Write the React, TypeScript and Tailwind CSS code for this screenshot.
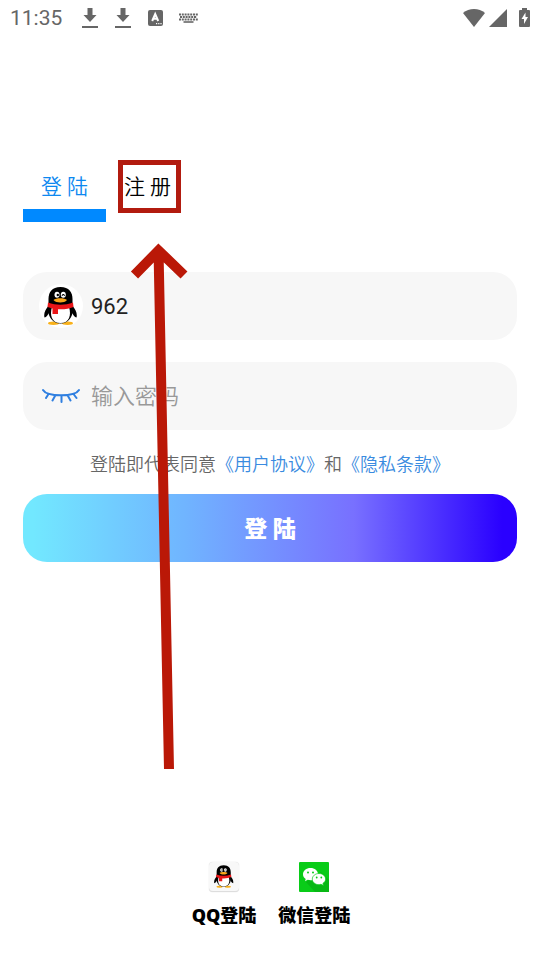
import React, { useState } from 'react'

const FONT = "font-['Roboto','Noto_Sans_CJK_SC',sans-serif]"

function DownloadIcon() {
  return (
    <svg className="h-5 w-4" viewBox="0 0 16 20" fill="#666" aria-hidden="true">
      <path d="M5.500 0h5v7h4L8 14 1.500 7h4z" />
      <path d="M0 18h16v2H0z" />
    </svg>
  )
}

function StatusBar() {
  return (
    <header className="flex h-9 items-center px-[10px] text-[#666]">
      <span className="w-[72px] font-['Roboto',sans-serif] text-[21px] leading-9">11:35</span>
      <DownloadIcon />
      <span className="w-[17px]" />
      <DownloadIcon />
      <svg className="ml-[17px] h-4 w-[15px]" viewBox="0 0 15 16" aria-hidden="true">
        <rect width="15" height="16" rx="2" fill="#666" />
        <path d="M4.200 11 7.200 4l3 7M5 8.800h4.500" fill="none" stroke="#fff" strokeWidth="2" />
        <path d="M8 13h1.200v1.200H8zM10.200 13h1.200v1.200h-1.200zM12.400 13h1.200v1.200h-1.200z" fill="#fff" />
      </svg>
      <svg className="ml-4 h-3 w-[19px]" viewBox="0 0 19 12" fill="none" stroke="#666" aria-hidden="true">
        <path d="M0 2.500h19M1 5h17M0 7.500h19" strokeWidth="1.800" strokeDasharray="2 .8" />
        <path d="M4.500 10h10" strokeWidth="1.600" />
      </svg>
      <svg className="ml-auto h-[19px] w-[22px]" viewBox="0 0 22 19" fill="#666" aria-hidden="true">
        <path d="M0 4C6-1.200 16-1.200 22 4L11 18z" />
      </svg>
      <svg className="ml-1 h-[19px] w-[18px]" viewBox="0 0 18 19" fill="#666" aria-hidden="true">
        <path d="M18 0v18H0z" />
      </svg>
      <svg className="ml-3 h-5 w-[11px]" viewBox="0 0 11 20" aria-hidden="true">
        <path d="M3 0h5v2h2q1 0 1 1v15q0 1-1 1H1q-1 0-1-1V3q0-1 1-1h2z" fill="#666" />
        <path d="M6.500 4.500 2.500 11H5v5l4-7H6.500z" fill="#fff" />
      </svg>
    </header>
  )
}

function Penguin({ className }: { className: string }) {
  return (
    <svg className={className} viewBox="0 0 34 38" aria-hidden="true">
      <ellipse cx="9.500" cy="36.300" rx="5.500" ry="1.700" fill="#f9b11a" />
      <ellipse cx="23.500" cy="36.300" rx="5.500" ry="1.700" fill="#f9b11a" />
      <path d="M5.500 18C1 22-.5 27 .5 30.500 2.500 30.500 4 27.500 5 26M27.500 18c4.500 4 6 9 5 12.500-2 0-3.500-3-4.500-4.500" fill="#000" />
      <path d="M16.500 0C8 0 4.500 5 4.500 12v8c-1.500 8 3 16.500 12 16.500S30 28 28.500 20v-8C28.500 5 25 0 16.500 0z" fill="#000" />
      <path d="M8 20h17c2.500 8 .5 16-8.500 16S5.500 28 8 20z" fill="#fff" />
      <ellipse cx="13" cy="7.800" rx="2.500" ry="3" fill="#fff" />
      <ellipse cx="19.300" cy="7.800" rx="2.500" ry="3" fill="#fff" />
      <circle cx="13.800" cy="8" r="1.200" fill="#000" />
      <path d="M18 8.800q1.300-2.600 2.600 0" fill="none" stroke="#000" strokeWidth="1.100" />
      <path d="M9.500 13c2.500-2.300 11-2.300 13.500 0-1.500 1.800-4 2.500-6.700 2.500S11 14.800 9.500 13z" fill="#f9a51a" />
      <path d="M4 15.500c8 3 17 3 25 0l.5 4.500c-4.500 2-10 2.500-15.500 2.200V27H8.500v-5.500L3.500 20z" fill="#ea1518" />
    </svg>
  )
}

function ClosedEye() {
  return (
    <svg className="h-4 w-[38px]" viewBox="0 0 38 16" fill="none" stroke="#2f7fe0" strokeWidth="2" strokeLinecap="round" aria-hidden="true">
      <path d="M1 2c4 7 32 7 36 0M6.500 6 4 10M13 8l-2.500 4.500M19.500 8.500V14M26 8l2.500 4.500M31.500 6l3 4" />
    </svg>
  )
}

function QQTile() {
  return (
    <span className="flex h-[30px] w-[30px] items-center justify-center rounded-sm border-b border-[#ddd] bg-[#f8f8f8] shadow-[0_0_1px_#ccc]">
      <Penguin className="h-[23px] w-5" />
    </span>
  )
}

function WeChatTile() {
  return (
    <svg className="h-[30px] w-[30px]" viewBox="0 0 30 30" aria-hidden="true">
      <rect width="30" height="30" rx="1" fill="#09cc18" />
      <path d="m22 10 8 8v12H16l-9-10z" fill="#08b815" />
      <path d="M11.500 6C7.300 6 4 8.700 4 12.200c0 2 1 3.600 2.700 4.700L6 19.200l2.700-1.400c4.500 1.500 10.300-.7 10.300-5.600C19 8.700 15.700 6 11.500 6z" fill="#fff" />
      <path d="M20 11.500c-3.800 0-6.700 2.500-6.700 5.600 0 3.900 4.300 6.500 8.700 5.200l2.500 1.300-.6-2.200c1.600-1 2.700-2.500 2.700-4.300 0-3.100-2.800-5.600-6.600-5.600z" fill="#fff" stroke="#09cc18" strokeWidth=".7" />
      <g fill="#09cc18">
        <circle cx="9" cy="10.500" r="1" />
        <circle cx="14" cy="10.500" r="1" />
        <circle cx="17.700" cy="15.500" r=".9" />
        <circle cx="22.300" cy="15.500" r=".9" />
      </g>
    </svg>
  )
}

type TabProps = {
  label: string
  active: boolean
  marked?: boolean
  onClick: () => void
}

function Tab({ label, active, marked, onClick }: TabProps) {
  return (
    <button
      type="button"
      role="tab"
      aria-selected={active}
      onClick={onClick}
      className={`relative w-[83px] border-b-[13px] text-[21px] leading-[44px] font-[350] ${active ? 'border-[#0089ff] text-[#0c88f0]' : 'border-transparent text-black'}`}
    >
      {label}
      {marked && <span className="pointer-events-none absolute -top-[5px] left-3 h-[53px] w-[63px] border-5 border-[#b21b0f]" />}
    </button>
  )
}

function GuideArrow() {
  return (
    <svg
      className="pointer-events-none absolute left-[130px] top-[242px] h-[528px] w-[60px]"
      viewBox="0 0 60 528"
      fill="none"
      stroke="#ba1807"
      strokeWidth="10"
      aria-hidden="true"
    >
      <path d="M28.500 8 39 527M4.500 33 28.500 8.500 54 33" />
    </svg>
  )
}

export default function App() {
  const [tab, setTab] = useState<'login' | 'register'>('login')

  return (
    <div lang="zh-CN" className={`relative flex min-h-screen flex-col bg-white ${FONT}`}>
      <StatusBar />

      <main className="px-[23px] pt-[129px]">
        <div role="tablist" className="flex">
          <Tab label="登 陆" active={tab === 'login'} onClick={() => setTab('login')} />
          <Tab label="注 册" active={tab === 'register'} marked onClick={() => setTab('register')} />
        </div>

        <form className="mt-[50px]" onSubmit={(event) => event.preventDefault()}>
          <label className="flex h-[68px] items-center rounded-3xl bg-[#f7f7f7] pl-4">
            <span className="flex h-11 w-11 items-center justify-center rounded-full bg-white">
              <Penguin className="h-[38px] w-[34px]" />
            </span>
            <input
              type="text"
              aria-label="账号"
              defaultValue="962"
              className="ml-2 min-w-0 flex-1 bg-transparent text-[22px] text-[#222] outline-none"
            />
          </label>

          <label className="mt-[22px] flex h-[68px] items-center rounded-3xl bg-[#f7f7f7] pl-4">
            <span className="flex h-11 w-11 items-center justify-center">
              <ClosedEye />
            </span>
            <input
              type="password"
              aria-label="密码"
              placeholder="输入密码"
              className="ml-2 min-w-0 flex-1 bg-transparent text-[22px] font-[350] outline-none placeholder:text-[#999]"
            />
          </label>

          <p className="mt-[23px] mb-[17px] text-center text-lg leading-6 font-[350] text-[#666]">
            登陆即代表同意
            <a href="#terms" className="text-[#3a8be0]">《用户协议》</a>
            和
            <a href="#privacy" className="text-[#3a8be0]">《隐私条款》</a>
          </p>

          <button
            type="submit"
            className="h-[68px] w-full rounded-3xl bg-[linear-gradient(90deg,#72e8ff_2%,#70b4ff_33%,#7870ff_67%,#2a00ff_97%)] pt-1 text-[23px] font-black text-white"
          >
            登 陆
          </button>
        </form>
      </main>

      <footer className="mt-auto flex justify-center gap-[22px] pb-[33px] pl-[2px] font-['Noto_Sans','Noto_Sans_CJK_SC',sans-serif]">
        <button type="button" className="flex flex-col items-center gap-[11px] text-lg leading-6 font-black text-black">
          <QQTile />
          QQ登陆
        </button>
        <button type="button" className="flex flex-col items-center gap-[11px] text-lg leading-6 font-black text-black">
          <WeChatTile />
          微信登陆
        </button>
      </footer>

      <GuideArrow />
    </div>
  )
}
